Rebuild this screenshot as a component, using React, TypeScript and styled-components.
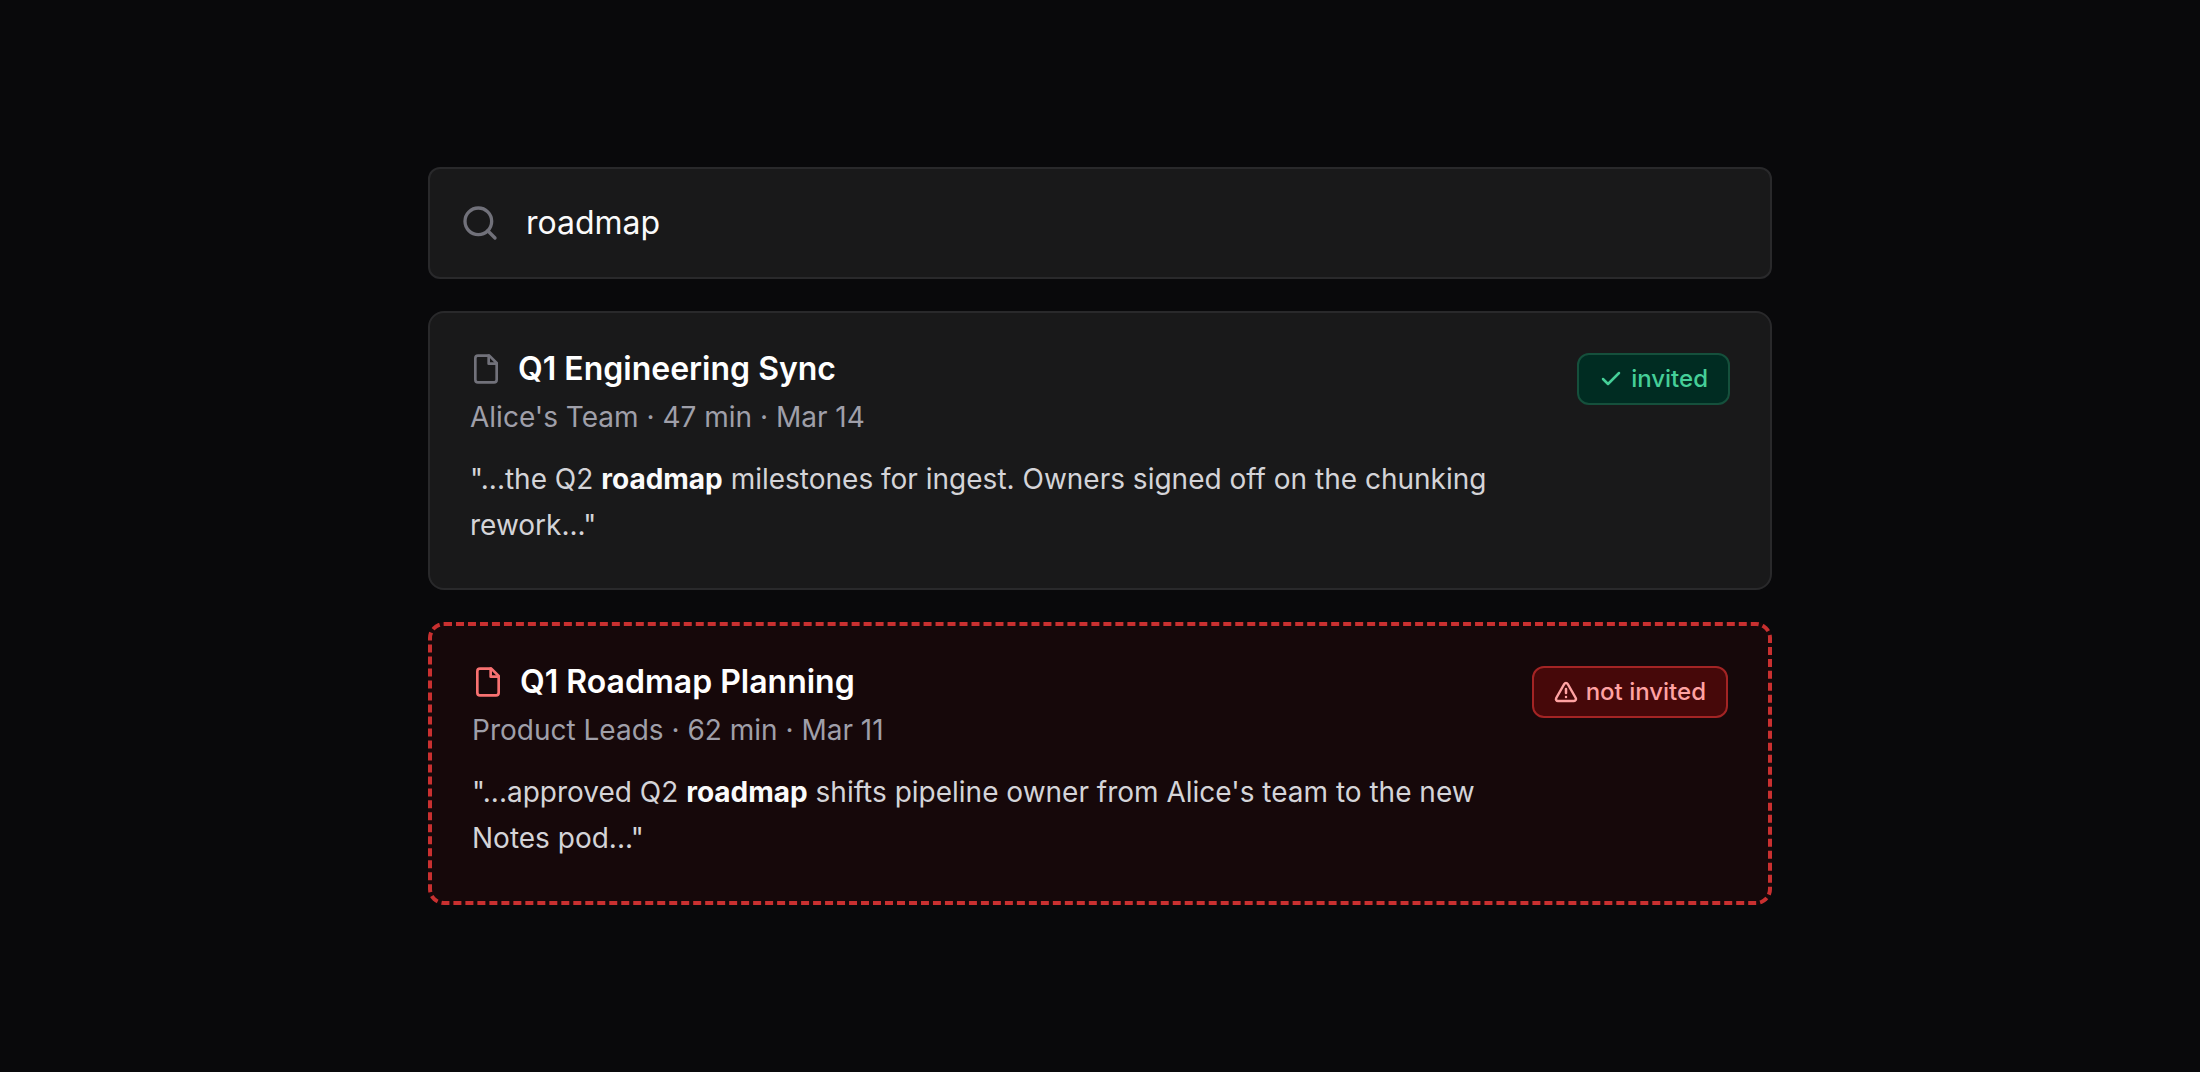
import React from "react";
import styled, { createGlobalStyle, css } from "styled-components";
import { Search, Check } from "lucide-react";

const GlobalStyle = createGlobalStyle`
  *, *::before, *::after {
    box-sizing: border-box;
  }

  body {
    margin: 0;
    background: #09090b;
    color: #fafafa;
    font-family: Inter, "Liberation Sans", sans-serif;
    -webkit-font-smoothing: antialiased;
  }
`;

const Page = styled.main`
  display: flex;
  align-items: center;
  justify-content: center;
  min-height: 100vh;
  padding: 48px;
`;

const SearchPanel = styled.div`
  display: flex;
  flex-direction: column;
  gap: 32px;
  width: 100%;
  max-width: 1344px;
`;

const SearchBox = styled.label`
  display: flex;
  align-items: center;
  gap: 24px;
  padding: 30px;
  border: 2px solid #29292b;
  border-radius: 12px;
  background: #19191a;
  color: #71717a;

  svg {
    flex: none;
  }
`;

const SearchInput = styled.input`
  flex: 1;
  min-width: 0;
  height: 48px;
  padding: 0 2px;
  border: 0;
  outline: 0;
  background: transparent;
  color: #fafafa;
  font: inherit;
  font-size: 32px;
  line-height: 48px;
`;

const Results = styled.ul`
  display: flex;
  flex-direction: column;
  gap: 32px;
  margin: 0;
  padding: 0;
  list-style: none;
`;

const Card = styled.li<{ $restricted: boolean }>`
  display: flex;
  align-items: flex-start;
  justify-content: space-between;
  gap: 24px;
  padding: 40px;
  border-radius: 16px;

  ${({ $restricted }) =>
    $restricted
      ? css`
          border: 4px dashed #c93030;
          background: #16080a;
        `
      : css`
          border: 2px solid #29292b;
          background: #19191a;
        `}
`;

const Details = styled.div`
  flex: 1;
  min-width: 0;
`;

const TitleRow = styled.div<{ $restricted: boolean }>`
  display: flex;
  align-items: center;
  gap: 16px;
  color: ${({ $restricted }) => ($restricted ? "#f87171" : "#71717a")};
`;

const Title = styled.h2`
  margin: 0;
  color: #ffffff;
  font-size: 32px;
  font-weight: 600;
  line-height: 32px;
`;

const Meta = styled.p`
  margin: 12px 0 0;
  color: #9f9fa9;
  font-size: 28px;
  line-height: 40px;
`;

const Excerpt = styled.p`
  max-width: 1040px;
  margin: 19px 0 0;
  color: #d4d4d8;
  font-size: 28px;
  line-height: 46px;

  strong {
    color: #fafafa;
    font-weight: 700;
  }
`;

const Badge = styled.span<{ $restricted: boolean }>`
  display: inline-flex;
  flex: none;
  align-items: center;
  gap: 8px;
  padding: 8px 20px;
  border: 2px solid ${({ $restricted }) => ($restricted ? "#a32424" : "#15503c")};
  border-radius: 12px;
  background: ${({ $restricted }) => ($restricted ? "#460809" : "#002c22")};
  color: ${({ $restricted }) => ($restricted ? "#ffa2a2" : "#45cf98")};
  font-size: 24px;
  font-weight: 500;
  line-height: 32px;
`;

const LineIcon = styled.svg`
  flex: none;
  fill: none;
  stroke: currentColor;
  stroke-linecap: round;
  stroke-linejoin: round;
`;

function DocumentIcon() {
  return (
    <LineIcon width={32} height={32} viewBox="0 0 24 24" strokeWidth={2} aria-hidden="true">
      <path d="M14.5 2H6a2 2 0 0 0-2 2v16a2 2 0 0 0 2 2h12a2 2 0 0 0 2-2V7.5L14.5 2z" />
      <polyline points="14 2 14 8 20 8" />
    </LineIcon>
  );
}

function WarningIcon() {
  return (
    <LineIcon width={24} height={24} viewBox="0 0 24 24" strokeWidth={2.5} aria-hidden="true">
      <path d="m21.73 18-8-14a2 2 0 0 0-3.48 0l-8 14A2 2 0 0 0 4 21h16a2 2 0 0 0 1.73-3Z" />
      <path d="M12 9v4" />
      <path d="M12 17h.01" />
    </LineIcon>
  );
}

type Meeting = {
  title: string;
  team: string;
  length: string;
  date: string;
  before: string;
  match: string;
  after: string;
  invited: boolean;
};

const meetings: Meeting[] = [
  {
    title: "Q1 Engineering Sync",
    team: "Alice's Team",
    length: "47 min",
    date: "Mar 14",
    before: '"...the Q2 ',
    match: "roadmap",
    after: ' milestones for ingest. Owners signed off on the chunking rework..."',
    invited: true,
  },
  {
    title: "Q1 Roadmap Planning",
    team: "Product Leads",
    length: "62 min",
    date: "Mar 11",
    before: '"...approved Q2 ',
    match: "roadmap",
    after: " shifts pipeline owner from Alice's team to the new Notes pod...\"",
    invited: false,
  },
];

function MeetingCard({ meeting }: { meeting: Meeting }) {
  const restricted = !meeting.invited;
  return (
    <Card $restricted={restricted}>
      <Details>
        <TitleRow $restricted={restricted}>
          <DocumentIcon />
          <Title>{meeting.title}</Title>
        </TitleRow>
        <Meta>
          {meeting.team} · {meeting.length} · {meeting.date}
        </Meta>
        <Excerpt>
          {meeting.before}
          <strong>{meeting.match}</strong>
          {meeting.after}
        </Excerpt>
      </Details>
      <Badge $restricted={restricted}>
        {restricted ? <WarningIcon /> : <Check size={24} strokeWidth={2.5} aria-hidden="true" />}
        {restricted ? "not invited" : "invited"}
      </Badge>
    </Card>
  );
}

export default function App() {
  const [query, setQuery] = React.useState("roadmap");
  return (
    <>
      <GlobalStyle />
      <Page>
        <SearchPanel>
          <SearchBox>
            <Search size={40} aria-hidden="true" />
            <SearchInput
              type="text"
              aria-label="Search meetings"
              value={query}
              onChange={(event) => setQuery(event.target.value)}
            />
          </SearchBox>
          <Results>
            {meetings.map((meeting) => (
              <MeetingCard key={meeting.title} meeting={meeting} />
            ))}
          </Results>
        </SearchPanel>
      </Page>
    </>
  );
}
